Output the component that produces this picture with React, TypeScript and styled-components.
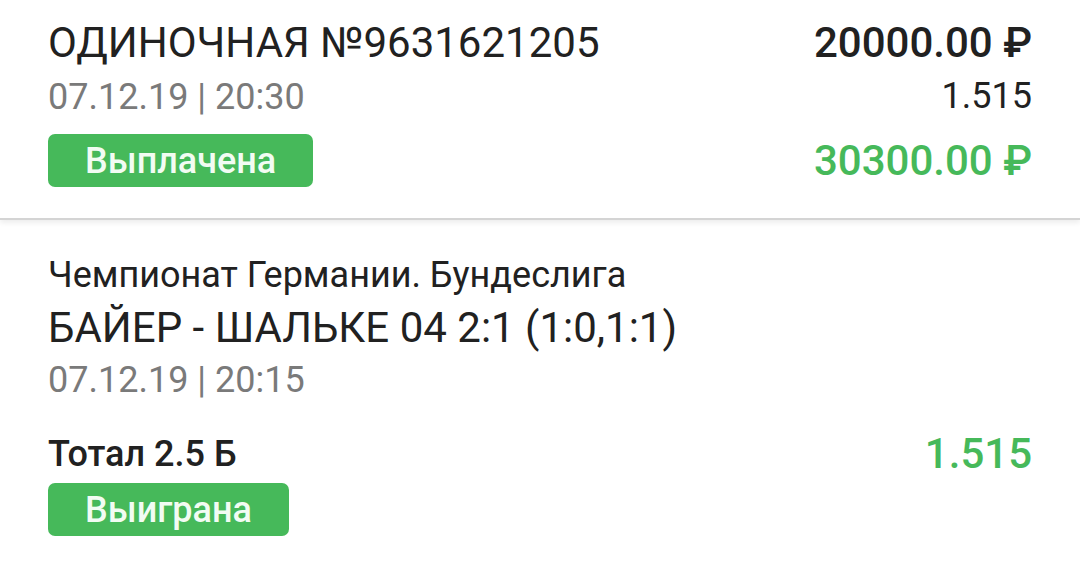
import React from "react"
import styled, { createGlobalStyle } from "styled-components"

const GlobalStyle = createGlobalStyle`
  html, body {
    margin: 0;
    padding: 0;
    background: #ffffff;
    font-family: Roboto, "Noto Sans", sans-serif;
    color: #212121;
  }
`

const GREEN = "#46b95a"

const Page = styled.div`
  width: 1080px;
  height: 561px;
  overflow: hidden;
  background: #fff;
`

const Card = styled.section`
  display: flex;
  justify-content: space-between;
  padding: 17px 48px 31px 48px;
  background: #fff;
  border-bottom: 2px solid #d4d4d4;
  box-shadow: 0 3px 5px rgba(0, 0, 0, 0.07);
`

const Column = styled.div<{ $right?: boolean }>`
  display: flex;
  flex-direction: column;
  align-items: ${(p) => (p.$right ? "flex-end" : "flex-start")};
`

const Title = styled.div`
  font-size: 42px;
  line-height: 52px;
  font-weight: 400;
  color: #212121;
`

const DateLine = styled.div<{ $top: number }>`
  margin-top: ${(p) => p.$top}px;
  font-size: 36px;
  line-height: 44px;
  color: #7a7a7a;
`

const Badge = styled.div<{ $top: number }>`
  margin-top: ${(p) => p.$top}px;
  height: 53px;
  padding: 0 37px;
  display: flex;
  align-items: center;
  background: ${GREEN};
  border-radius: 7px;
  color: #f2fcf3;
  font-size: 36px;
  font-weight: 500;
`

const Amount = styled.div<{ $green?: boolean; $top?: number }>`
  margin-top: ${(p) => p.$top ?? 0}px;
  font-size: 42px;
  line-height: 52px;
  font-weight: 500;
  color: ${(p) => (p.$green ? GREEN : "#212121")};
`

const Coef = styled.div`
  margin-top: 5px;
  font-size: 36px;
  line-height: 44px;
  color: #212121;
`

const Event = styled.section`
  padding: 33px 48px 0 48px;
  display: flex;
  flex-direction: column;
  align-items: flex-start;
`

const League = styled.div`
  font-size: 36px;
  line-height: 44px;
  color: #212121;
`

const Match = styled.div`
  margin-top: 5px;
  font-size: 42px;
  line-height: 52px;
  color: #212121;
`

const OutcomeRow = styled.div`
  align-self: stretch;
  display: flex;
  justify-content: space-between;
  align-items: center;
  margin-top: 30px;
`

const Outcome = styled.div`
  font-size: 36px;
  line-height: 44px;
  font-weight: 500;
  color: #212121;
`

const OutcomeCoef = styled.div`
  font-size: 42px;
  line-height: 44px;
  font-weight: 500;
  color: ${GREEN};
`

export default function App() {
  return (
    <Page>
      <GlobalStyle />
      <Card>
        <Column>
          <Title>ОДИНОЧНАЯ №9631621205</Title>
          <DateLine $top={6}>07.12.19 | 20:30</DateLine>
          <Badge $top={15}>Выплачена</Badge>
        </Column>
        <Column $right>
          <Amount>20000.00 ₽</Amount>
          <Coef>1.515</Coef>
          <Amount $green $top={17}>30300.00 ₽</Amount>
        </Column>
      </Card>
      <Event>
        <League>Чемпионат Германии. Бундеслига</League>
        <Match>БАЙЕР - ШАЛЬКЕ 04 2:1 (1:0,1:1)</Match>
        <DateLine $top={4}>07.12.19 | 20:15</DateLine>
        <OutcomeRow>
          <Outcome>Тотал 2.5 Б</Outcome>
          <OutcomeCoef>1.515</OutcomeCoef>
        </OutcomeRow>
        <Badge $top={7}>Выиграна</Badge>
      </Event>
    </Page>
  )
}
